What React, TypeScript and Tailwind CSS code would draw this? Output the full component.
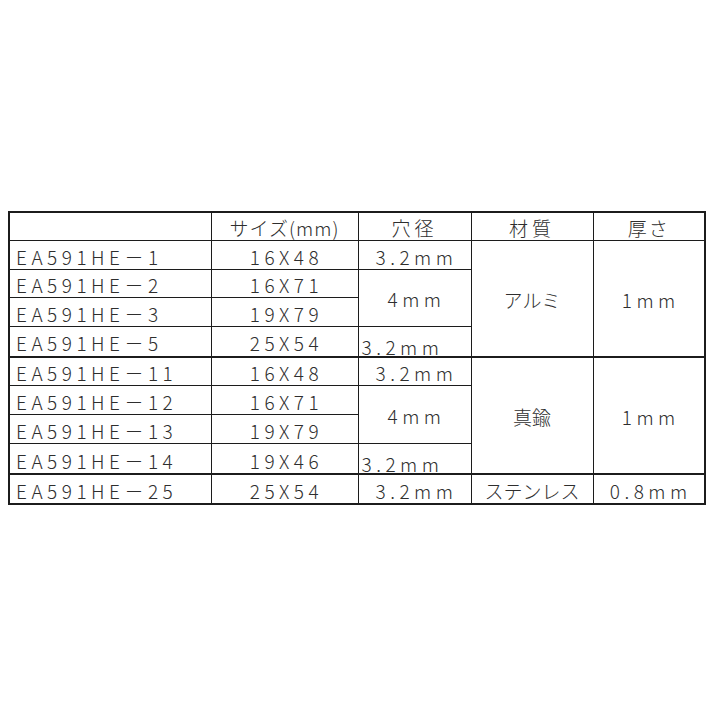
const rows = [
  { part: "EA591HE－1", size: "16X48" },
  { part: "EA591HE－2", size: "16X71" },
  { part: "EA591HE－3", size: "19X79" },
  { part: "EA591HE－5", size: "25X54" },
];

const rows2 = [
  { part: "EA591HE－11", size: "16X48" },
  { part: "EA591HE－12", size: "16X71" },
  { part: "EA591HE－13", size: "19X79" },
  { part: "EA591HE－14", size: "19X46" },
];

const cell = "border border-[#1c1c1c] p-0 leading-none";
const alnum = "tracking-[4.5px]";

function Group({
  items,
  material,
  heights,
}: {
  items: { part: string; size: string }[];
  material: string;
  heights: string[];
}) {
  return (
    <>
      {items.map((r, i) => {
        const last = i === items.length - 1;
        const bottom = last ? "border-b-2" : "";
        return (
          <tr key={r.part} className={heights[i]}>
            <td className={`${cell} ${bottom} ${alnum} pl-[6px] pt-[3px] text-left`}>{r.part}</td>
            <td className={`${cell} ${bottom} ${alnum} pt-[3px] pl-[4px] text-center`}>{r.size}</td>
            {i === 0 && (
              <td className={`${cell} ${alnum} pt-[3px] pl-[4px] text-center`}>3.2mm</td>
            )}
            {i === 1 && (
              <td rowSpan={2} className={`${cell} ${alnum} pt-[2px] pl-[4px] text-center`}>
                4mm
              </td>
            )}
            {last && (
              <td className={`${cell} ${bottom} ${alnum} pt-[10px] pl-[3px] text-left`}>3.2mm</td>
            )}
            {i === 0 && (
              <>
                <td rowSpan={4} className={`${cell} border-b-2 text-center pt-[2px]`}>
                  {material}
                </td>
                <td rowSpan={4} className={`${cell} border-b-2 ${alnum} pl-[4px] pt-[2px] text-center`}>
                  1mm
                </td>
              </>
            )}
          </tr>
        );
      })}
    </>
  );
}

export default function App() {
  return (
    <div className="min-h-[713px] w-[713px] bg-white pl-[8px] pt-[211px]">
      <table
        className="table-fixed border-collapse border-2 border-[#1c1c1c] text-[19px] font-light text-[#2e2e2e]"
        style={{ width: 696, fontFamily: '"Noto Sans CJK JP", "Noto Sans", sans-serif' }}
      >
        <colgroup>
          <col className="w-[202px]" />
          <col className="w-[147px]" />
          <col className="w-[113px]" />
          <col className="w-[122px]" />
          <col className="w-[112px]" />
        </colgroup>
        <thead>
          <tr className="h-[28px]">
            <th className={`${cell} font-light`}></th>
            <th className={`${cell} font-light text-center tracking-[1px] pt-[2px]`}>サイズ(mm)</th>
            <th className={`${cell} font-light text-center tracking-[4px] pt-[2px]`}>穴径</th>
            <th className={`${cell} font-light text-center tracking-[4px] pt-[2px]`}>材質</th>
            <th className={`${cell} font-light text-center tracking-[2px] pt-[2px]`}>厚さ</th>
          </tr>
        </thead>
        <tbody>
          <Group
            items={rows}
            material="アルミ"
            heights={["h-[29px]", "h-[28px]", "h-[29px]", "h-[29px]"]}
          />
          <Group
            items={rows2}
            material="真鍮"
            heights={["h-[29px]", "h-[29px]", "h-[29px]", "h-[29px]"]}
          />
          <tr className="h-[30px]">
            <td className={`${cell} ${alnum} pl-[6px] pt-[3px] text-left`}>EA591HE－25</td>
            <td className={`${cell} ${alnum} pl-[4px] pt-[3px] text-center`}>25X54</td>
            <td className={`${cell} ${alnum} pl-[4px] pt-[3px] text-center`}>3.2mm</td>
            <td className={`${cell} pt-[3px] text-center`}>ステンレス</td>
            <td className={`${cell} ${alnum} pl-[4px] pt-[3px] text-center`}>0.8mm</td>
          </tr>
        </tbody>
      </table>
    </div>
  );
}
